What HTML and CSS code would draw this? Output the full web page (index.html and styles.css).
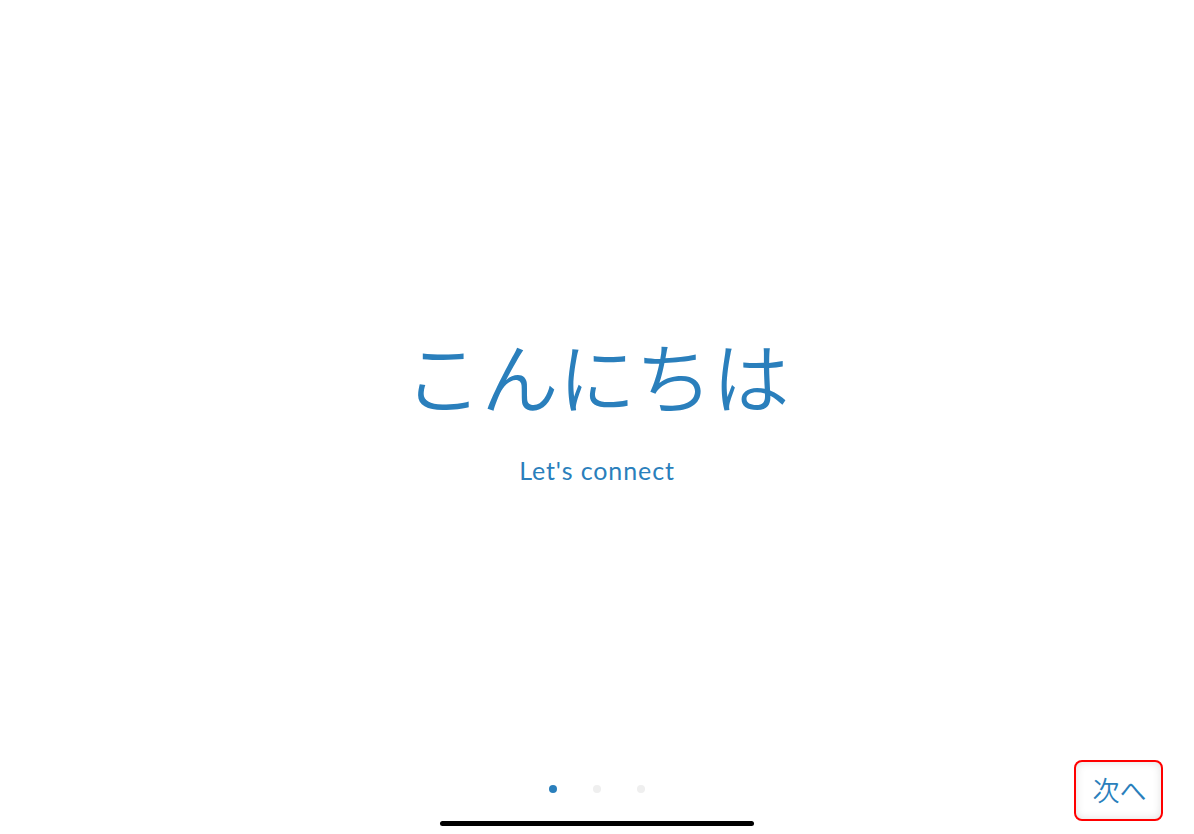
FILE: index.html
```html
<!DOCTYPE html>
<html lang="ja">
<head>
<meta charset="utf-8">
<title>こんにちは</title>
<link rel="stylesheet" href="styles.css">
</head>
<body>
<div class="screen">
  <main class="hero">
    <h1 class="title">こんにちは</h1>
    <p class="subtitle">Let's connect</p>
  </main>
  <footer class="bottom">
    <div class="spacer"></div>
    <div class="dots">
      <span class="dot active"></span>
      <span class="dot"></span>
      <span class="dot"></span>
    </div>
    <button class="next">次へ</button>
  </footer>
  <div class="home-indicator"></div>
</div>
</body>
</html>
```

FILE: styles.css
```css
html, body {
  margin: 0;
  padding: 0;
  background: #ffffff;
}

.screen {
  position: relative;
  width: 1194px;
  height: 834px;
  display: flex;
  flex-direction: column;
  overflow: hidden;
  font-family: "Noto Sans CJK JP", "Noto Sans", sans-serif;
  color: #2a7fbc;
}

.hero {
  flex: 1;
  display: flex;
  flex-direction: column;
  align-items: center;
  padding-top: 336px;
}

.title {
  margin: 0;
  font-size: 77px;
  line-height: 77px;
  font-weight: 350;
  letter-spacing: 0;
  color: #2a7fbc;
}

.subtitle {
  margin: 42px 0 0;
  font-family: Lato, "Noto Sans", sans-serif;
  font-size: 25px;
  line-height: 30px;
  font-weight: 400;
  letter-spacing: 0.9px;
  color: #2a7fbc;
}

.bottom {
  display: grid;
  grid-template-columns: 1fr auto 1fr;
  align-items: center;
  padding: 0 31px 13px 31px;
}

.dots {
  display: flex;
  gap: 36px;
  padding-bottom: 4px;
}

.dot {
  width: 8px;
  height: 8px;
  border-radius: 50%;
  background: #efefef;
}

.dot.active {
  background: #2a7fbc;
}

.next {
  justify-self: end;
  width: 89px;
  height: 61px;
  box-sizing: border-box;
  border: 2px solid #ff0000;
  border-radius: 8px;
  background: #ffffff;
  box-shadow: inset 0 0 8px rgba(0, 0, 0, 0.13);
  font-family: "Noto Sans CJK JP", sans-serif;
  font-size: 27px;
  font-weight: 350;
  line-height: 1;
  color: #2a7fbc;
  padding: 0 0 2px 2px;
  cursor: pointer;
}

.home-indicator {
  position: absolute;
  left: 440px;
  top: 821px;
  width: 314px;
  height: 5px;
  border-radius: 3px;
  background: #000000;
}
```
